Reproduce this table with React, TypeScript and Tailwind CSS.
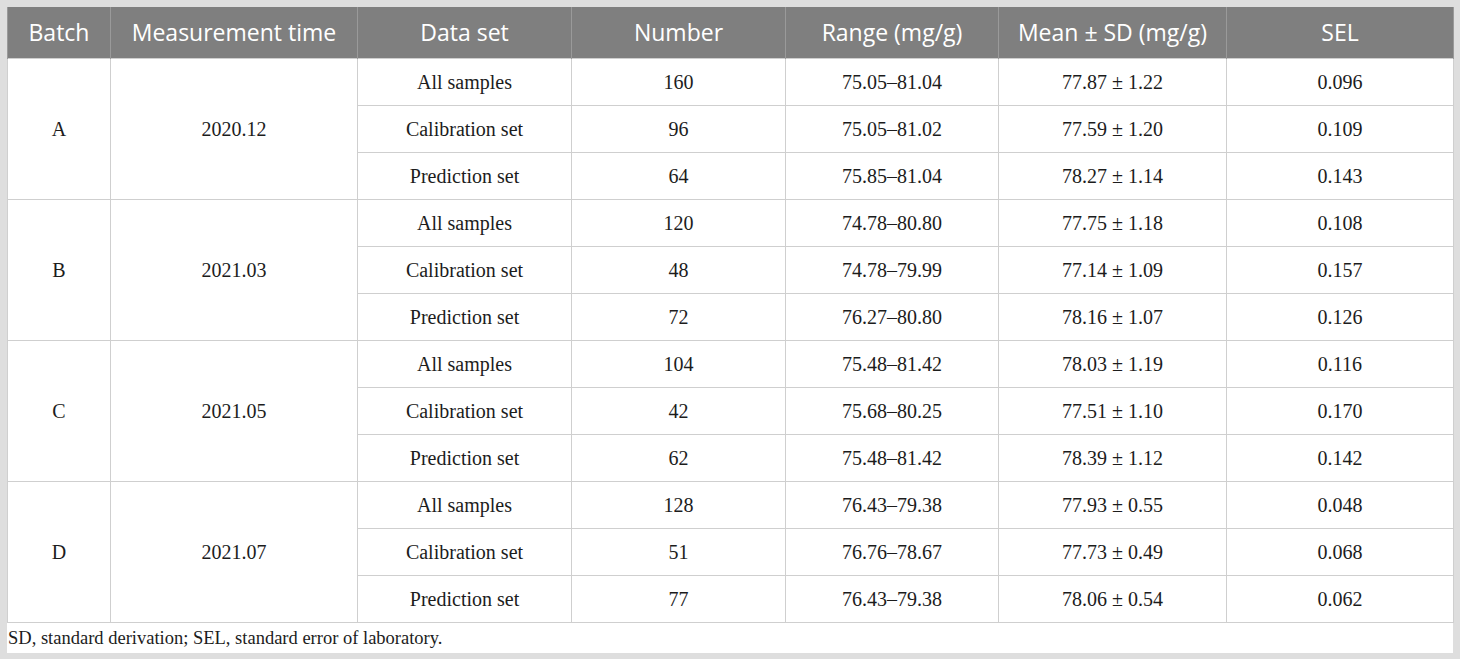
const batches = [
  {
    batch: "A",
    time: "2020.12",
    rows: [
      ["All samples", "160", "75.05–81.04", "77.87 ± 1.22", "0.096"],
      ["Calibration set", "96", "75.05–81.02", "77.59 ± 1.20", "0.109"],
      ["Prediction set", "64", "75.85–81.04", "78.27 ± 1.14", "0.143"],
    ],
  },
  {
    batch: "B",
    time: "2021.03",
    rows: [
      ["All samples", "120", "74.78–80.80", "77.75 ± 1.18", "0.108"],
      ["Calibration set", "48", "74.78–79.99", "77.14 ± 1.09", "0.157"],
      ["Prediction set", "72", "76.27–80.80", "78.16 ± 1.07", "0.126"],
    ],
  },
  {
    batch: "C",
    time: "2021.05",
    rows: [
      ["All samples", "104", "75.48–81.42", "78.03 ± 1.19", "0.116"],
      ["Calibration set", "42", "75.68–80.25", "77.51 ± 1.10", "0.170"],
      ["Prediction set", "62", "75.48–81.42", "78.39 ± 1.12", "0.142"],
    ],
  },
  {
    batch: "D",
    time: "2021.07",
    rows: [
      ["All samples", "128", "76.43–79.38", "77.93 ± 0.55", "0.048"],
      ["Calibration set", "51", "76.76–78.67", "77.73 ± 0.49", "0.068"],
      ["Prediction set", "77", "76.43–79.38", "78.06 ± 0.54", "0.062"],
    ],
  },
];

const headers = [
  "Batch",
  "Measurement time",
  "Data set",
  "Number",
  "Range (mg/g)",
  "Mean ± SD (mg/g)",
  "SEL",
];

export default function App() {
  return (
    <div className="w-[1460px] h-[659px] bg-[#dedede] p-[7px]">
      <table
        className="w-[1446px] table-fixed border-collapse bg-white text-[#1c1c1c]"
        style={{ fontFamily: '"Liberation Serif", serif' }}
      >
        <colgroup>
          <col className="w-[103px]" />
          <col className="w-[247px]" />
          <col className="w-[214px]" />
          <col className="w-[214px]" />
          <col className="w-[213px]" />
          <col className="w-[228px]" />
          <col className="w-[227px]" />
        </colgroup>
        <thead>
          <tr className="h-[51px] bg-[#7f7f7f]">
            {headers.map((h) => (
              <th
                key={h}
                className="border-x border-[#9a9a9a] p-0 text-center text-[23px] font-normal text-white"
                style={{ fontFamily: '"Open Sans", sans-serif' }}
              >
                {h}
              </th>
            ))}
          </tr>
        </thead>
        <tbody className="text-[20px]">
          {batches.map((b) =>
            b.rows.map((r, i) => (
              <tr key={b.batch + i} className="h-[47px]">
                {i === 0 && (
                  <>
                    <td rowSpan={3} className="border border-[#cfcfcf] p-0 text-center">
                      {b.batch}
                    </td>
                    <td rowSpan={3} className="border border-[#cfcfcf] p-0 text-center">
                      {b.time}
                    </td>
                  </>
                )}
                {r.map((c, j) => (
                  <td key={j} className="border border-[#cfcfcf] p-0 text-center">
                    {c}
                  </td>
                ))}
              </tr>
            ))
          )}
        </tbody>
      </table>
      <div
        className="h-[30px] w-[1446px] bg-white pl-[1px] text-[18.5px] leading-[30px] text-[#1c1c1c]"
        style={{ fontFamily: '"Liberation Serif", serif' }}
      >
        SD, standard derivation; SEL, standard error of laboratory.
      </div>
    </div>
  );
}
